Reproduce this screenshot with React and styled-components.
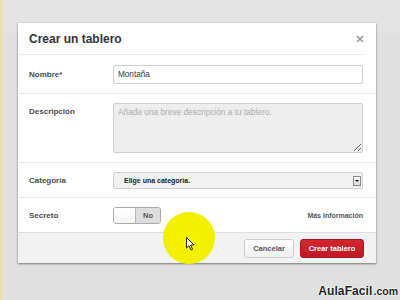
import React from "react";
import styled, { createGlobalStyle } from "styled-components";

const Global = createGlobalStyle`
  html, body { margin: 0; padding: 0; background: #e0e0e0; }
  body { font-family: "Liberation Sans", Arial, sans-serif; }
  * { box-sizing: border-box; }
`;

const Page = styled.div`
  position: relative;
  width: 400px;
  height: 300px;
  overflow: hidden;
  background: linear-gradient(#e4e4e4 0, #e4e4e4 33px, #e0e0e0 33px);
  border-left: 2px solid #e6e4a4;
  padding: 23px 0 0 16px;
`;

const Modal = styled.div`
  width: 358px;
  background: #fff;
  box-shadow: 0 1px 2px rgba(0, 0, 0, 0.45), 0 0 1px rgba(0, 0, 0, 0.2);
`;

const Header = styled.div`
  height: 32px;
  margin-right: 11px;
  padding: 0 1px 0 11px;
  display: flex;
  align-items: center;
  justify-content: space-between;
  border-bottom: 1px solid #ececec;
`;

const Title = styled.h1`
  margin: 0;
  font-size: 12px;
  font-weight: bold;
  color: #333;
`;

const Close = styled.svg`
  width: 8px;
  height: 8px;
  display: block;
`;

const Row = styled.div`
  display: grid;
  grid-template-columns: 84px 1fr;
  align-items: start;
  padding: ${(p) => (p.$first ? "10px" : "9px")} 13px ${(p) => p.$pb || 9}px 11px;
  border-top: ${(p) => (p.$first ? "none" : "1px solid #e8e8e8")};
`;

const Label = styled.label`
  font-size: 8px;
  font-weight: bold;
  color: #4a4a4a;
  line-height: 11px;
  padding-top: ${(p) => p.$pt || 4}px;
`;

const TextInput = styled.input`
  height: 19px;
  width: 100%;
  border: 1px solid #cfcfcf;
  border-radius: 2px;
  padding: 0 4px;
  font-family: inherit;
  font-size: 8.2px;
  color: #333;
  background: #fff;
  outline: none;
`;

const TextArea = styled.textarea`
  display: block;
  width: 100%;
  height: 50px;
  border: 1px solid #cfcfcf;
  border-radius: 2px;
  padding: 3px 4px;
  font-family: inherit;
  font-size: 8.3px;
  background: #eeeeee;
  color: #333;
  outline: none;
  resize: both;
  &::placeholder { color: #ababab; }
`;

const Select = styled.div`
  height: 17px;
  border: 1px solid #d0d0d0;
  border-radius: 2px;
  background: #f1f1f1;
  display: flex;
  align-items: center;
  justify-content: space-between;
  padding: 0 1px 0 10px;
`;

const SelectText = styled.span`
  font-size: 7px;
  font-weight: bold;
  color: #222;
`;

const ArrowBox = styled.span`
  width: 8px;
  height: 10px;
  border: 1px solid #8a8a8a;
  background: linear-gradient(#f8f8f8, #dcdcdc);
  display: flex;
  align-items: center;
  justify-content: center;
  &::after {
    content: "";
    border-left: 2px solid transparent;
    border-right: 2px solid transparent;
    border-top: 2px solid #111;
  }
`;

const SwitchLine = styled.div`
  display: flex;
  align-items: center;
  justify-content: space-between;
`;

const Toggle = styled.div`
  width: 48px;
  height: 17px;
  border: 1px solid #a9a9a9;
  border-radius: 3px;
  display: flex;
  overflow: hidden;
`;

const Knob = styled.span`
  width: 22px;
  background: linear-gradient(#ffffff, #f2f2f2);
  border-right: 1px solid #b5b5b5;
`;

const ToggleText = styled.span`
  flex: 1;
  background: #dedede;
  display: flex;
  align-items: center;
  justify-content: center;
  font-size: 7.5px;
  font-weight: bold;
  color: #555;
`;

const MoreLink = styled.span`
  font-size: 7px;
  font-weight: bold;
  color: #555;
`;

const Footer = styled.div`
  border-top: 1px solid #dcdcdc;
  background: #f2f2f2;
  padding: 6px 12px 5px;
  display: flex;
  justify-content: flex-end;
  gap: 6px;
`;

const Button = styled.button`
  height: 19px;
  width: ${(p) => p.$w}px;
  border-radius: 3px;
  font-family: inherit;
  font-size: 7.5px;
  font-weight: bold;
  padding: 0;
  border: 1px solid ${(p) => (p.$primary ? "#a8141e" : "#cdcdcd")};
  color: ${(p) => (p.$primary ? "#fff" : "#555")};
  background: ${(p) =>
    p.$primary
      ? "linear-gradient(#d3262f, #bd1b24)"
      : "linear-gradient(#ffffff, #efefef)"};
`;

const Highlight = styled.div`
  position: absolute;
  left: 161px;
  top: 212px;
  width: 52px;
  height: 52px;
  border-radius: 50%;
  background: radial-gradient(circle, #f4f400 0%, #f0f000 70%, rgba(240, 240, 0, 0.85) 100%);
`;

const Cursor = styled.svg`
  position: absolute;
  left: 184px;
  top: 237px;
  width: 9px;
  height: 14px;
`;

const Watermark = styled.div`
  position: absolute;
  right: 2px;
  bottom: 2px;
  font-weight: bold;
  color: #1e1e1e;
  text-shadow: 0 0 2px #fff, 0 0 2px #fff, 0 0 1px #fff;
  display: flex;
  align-items: baseline;
`;

const Brand = styled.span`
  font-size: 12px;
  letter-spacing: 0.1px;
`;

const Tld = styled.span`
  font-size: 10.5px;
  margin-left: 1px;
`;

export default function App() {
  return (
    <>
      <Global />
      <Page>
        <Modal>
          <Header>
            <Title>Crear un tablero</Title>
            <Close viewBox="0 0 8 8">
              <path d="M1 1 L7 7 M7 1 L1 7" stroke="#9a9a9a" strokeWidth="1.7" />
            </Close>
          </Header>
          <Row $first>
            <Label>Nombre*</Label>
            <TextInput readOnly value="Montaña" />
          </Row>
          <Row>
            <Label $pt={3}>Descripción</Label>
            <TextArea readOnly placeholder="Añade una breve descripción a tu tablero." />
          </Row>
          <Row $pb={8}>
            <Label $pt={3}>Categoría</Label>
            <Select>
              <SelectText>Elige una categoría.</SelectText>
              <ArrowBox />
            </Select>
          </Row>
          <Row $pb={8}>
            <Label $pt={3}>Secreto</Label>
            <SwitchLine>
              <Toggle>
                <Knob />
                <ToggleText>No</ToggleText>
              </Toggle>
              <MoreLink>Más información</MoreLink>
            </SwitchLine>
          </Row>
          <Footer>
            <Button $w={50}>Cancelar</Button>
            <Button $w={64} $primary>Crear tablero</Button>
          </Footer>
        </Modal>
        <Highlight />
        <Cursor viewBox="0 0 9 14">
          <path d="M0.5 0.5 L0.5 11 L3 8.6 L5 13 L6.6 12.3 L4.7 8 L8 8 Z" fill="#fff" stroke="#111" strokeWidth="0.9" strokeLinejoin="round" />
        </Cursor>
        <Watermark>
          <Brand>AulaFacil</Brand>
          <Tld>.com</Tld>
        </Watermark>
      </Page>
    </>
  );
}
